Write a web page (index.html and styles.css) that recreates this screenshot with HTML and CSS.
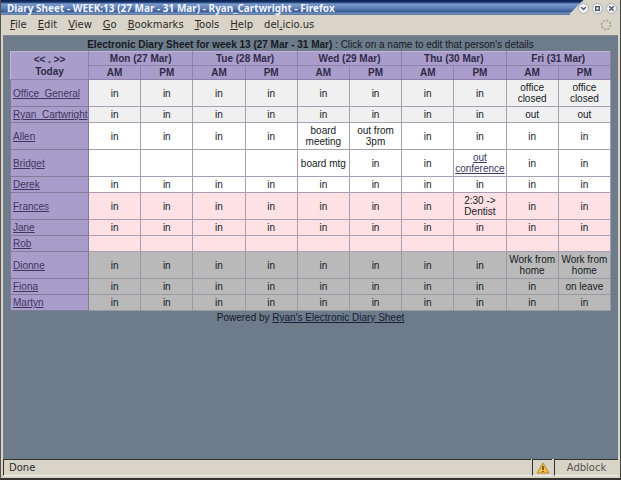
FILE: index.html
```html
<!doctype html>
<html lang="en">
<head>
<meta charset="UTF-8">
<title>Diary Sheet - WEEK:13 (27 Mar - 31 Mar) - Ryan_Cartwright</title>
<link rel="stylesheet" href="styles.css">
</head>

<body>
<div class="window">
	<header class="titlebar">
		<h1>Diary Sheet - WEEK:13 (27 Mar - 31 Mar) - Ryan_Cartwright - Firefox</h1>
		<div class="winbuttons">
			<button aria-label="Minimize"><svg viewBox="0 0 10 10"><path d="M2.5 3.5L5 6L7.5 3.5"/></svg></button>
			<button aria-label="Maximize"><svg viewBox="0 0 10 10"><rect x="3" y="3" width="4" height="4"/></svg></button>
			<button aria-label="Close"><svg viewBox="0 0 10 10"><path d="M2.5 2.5L7.5 7.5M7.5 2.5L2.5 7.5"/></svg></button>
		</div>
	</header>

	<nav class="menubar">
		<button><u>F</u>ile</button>
		<button><u>E</u>dit</button>
		<button><u>V</u>iew</button>
		<button><u>G</u>o</button>
		<button><u>B</u>ookmarks</button>
		<button><u>T</u>ools</button>
		<button><u>H</u>elp</button>
		<button>del<u>.</u>icio.us</button>
		<svg class="throbber" viewBox="0 0 12 12"><circle cx="6" cy="6" r="4.5"/></svg>
	</nav>

	<main class="page">
		<p class="heading"><b>Electronic Diary Sheet for week 13 (27 Mar - 31 Mar)</b> : Click on a name to edit that person's details</p>
		<table class="diary">
			<colgroup>
				<col class="names">
				<col span="10">
			</colgroup>
			<thead>
				<tr>
					<th rowspan="2" class="weeks"><a href="#">&lt;&lt;</a> <a href="#">.</a> <a href="#">&gt;&gt;</a><br><a href="#">Today</a></th>
					<th colspan="2">Mon (27 Mar)</th>
					<th colspan="2">Tue (28 Mar)</th>
					<th colspan="2">Wed (29 Mar)</th>
					<th colspan="2">Thu (30 Mar)</th>
					<th colspan="2">Fri (31 Mar)</th>
				</tr>
				<tr>
					<th>AM</th><th>PM</th>
					<th>AM</th><th>PM</th>
					<th>AM</th><th>PM</th>
					<th>AM</th><th>PM</th>
					<th>AM</th><th>PM</th>
				</tr>
			</thead>
			<tbody class="office">
				<tr><th><a href="#">Office_General</a></th><td>in</td><td>in</td><td>in</td><td>in</td><td>in</td><td>in</td><td>in</td><td>in</td><td>office<br>closed</td><td>office<br>closed</td></tr>
				<tr><th><a href="#">Ryan_Cartwright</a></th><td>in</td><td>in</td><td>in</td><td>in</td><td>in</td><td>in</td><td>in</td><td>in</td><td>out</td><td>out</td></tr>
			</tbody>
			<tbody class="white">
				<tr><th><a href="#">Allen</a></th><td>in</td><td>in</td><td>in</td><td>in</td><td>board<br>meeting</td><td>out from<br>3pm</td><td>in</td><td>in</td><td>in</td><td>in</td></tr>
				<tr class="tall"><th><a href="#">Bridget</a></th><td></td><td></td><td></td><td></td><td>board mtg</td><td>in</td><td>in</td><td><a href="#">out<br>conference</a></td><td>in</td><td>in</td></tr>
				<tr><th><a href="#">Derek</a></th><td>in</td><td>in</td><td>in</td><td>in</td><td>in</td><td>in</td><td>in</td><td>in</td><td>in</td><td>in</td></tr>
			</tbody>
			<tbody class="pink">
				<tr><th><a href="#">Frances</a></th><td>in</td><td>in</td><td>in</td><td>in</td><td>in</td><td>in</td><td>in</td><td>2:30 -&gt;<br>Dentist</td><td>in</td><td>in</td></tr>
				<tr><th><a href="#">Jane</a></th><td>in</td><td>in</td><td>in</td><td>in</td><td>in</td><td>in</td><td>in</td><td>in</td><td>in</td><td>in</td></tr>
				<tr><th><a href="#">Rob</a></th><td></td><td></td><td></td><td></td><td></td><td></td><td></td><td></td><td></td><td></td></tr>
			</tbody>
			<tbody class="grey">
				<tr><th><a href="#">Dionne</a></th><td>in</td><td>in</td><td>in</td><td>in</td><td>in</td><td>in</td><td>in</td><td>in</td><td>Work from<br>home</td><td>Work from<br>home</td></tr>
				<tr><th><a href="#">Fiona</a></th><td>in</td><td>in</td><td>in</td><td>in</td><td>in</td><td>in</td><td>in</td><td>in</td><td>in</td><td>on leave</td></tr>
				<tr><th><a href="#">Martyn</a></th><td>in</td><td>in</td><td>in</td><td>in</td><td>in</td><td>in</td><td>in</td><td>in</td><td>in</td><td>in</td></tr>
			</tbody>
		</table>
		<p class="powered">Powered by <a href="#">Ryan's Electronic Diary Sheet</a></p>
	</main>

	<footer class="statusbar">
		<span class="status">Done</span>
		<span class="warning"><svg viewBox="0 0 14 12"><path class="sign" d="M7 1L13 11H1Z"/><path class="mark" d="M7 4V8M7 9V10"/></svg></span>
		<span class="adblock">Adblock</span>
	</footer>
</div>
</body>
</html>
```

FILE: styles.css
```css
*{
	box-sizing: border-box;
}
body {
	margin: 0;
	font-family: "Liberation Sans", Arial, sans-serif;
	font-size: 10px;
	line-height: 12px;
	color: #161a24;
}
button {
	padding: 0;
	border: 0;
	background: none;
	font: inherit;
	color: inherit;
}
p {
	margin: 0;
}

.window {
	display: flex;
	flex-direction: column;
	min-height: 100vh;
	padding: 0 2px;
	background-color: #d8d4c8;
	border-left: 1px solid #55554f;
	border-right: 1px solid #44443f;
	border-bottom: 2px solid #33332e;
}

/* title bar */
.titlebar {
	display: flex;
	justify-content: space-between;
	height: 15px;
	margin: 0 -2px;
	padding-left: 6px;
	background: linear-gradient(#0c2350 0, #143066 2px, #7c9bcd 4px, #6080b6 8px, #355994 12px, #7b96c0 13px, #5673a2);
}
.titlebar h1 {
	margin: 0;
	font: bold 10px/16px "Noto Sans", "DejaVu Sans", sans-serif;
	color: #f0f4fc;
	white-space: nowrap;
}
.winbuttons {
	display: flex;
	gap: 3px;
	padding: 3px 3px 0 8px;
	background: linear-gradient(135deg, transparent 9px, #d8d4c8 10px);
}
.winbuttons button {
	width: 11px;
	height: 11px;
	border-radius: 50%;
	background-color: #eeeef0;
	border: 1px solid #a9afba;
}
.winbuttons svg {
	display: block;
	fill: none;
	stroke: #4a5260;
	stroke-width: 1.5;
}

/* menu */
.menubar {
	display: flex;
	align-items: center;
	gap: 11px;
	height: 20px;
	padding: 0 6px 0 7px;
	font-family: "DejaVu Sans", sans-serif;
	color: #2b2b27;
}
.throbber {
	width: 12px;
	margin-left: auto;
	fill: none;
	stroke: #aaa79f;
	stroke-width: 2;
	stroke-dasharray: 2 1.5;
}

/* diary */
.page {
	flex: 1;
	padding: 3px 7px 0;
	background-color: #6d7b8a;
	border-top: 1px solid #85888a;
	text-align: center;
}
.diary {
	width: 100%;
	table-layout: fixed;
	border-collapse: collapse;
	line-height: 11px;
	border: 1px solid #c6bddd;
}
.names {
	width: 13%;
}
.diary th, .diary td {
	padding: 2px 0;
	height: 16px;
	border: 1px solid #a69fb1;
}
.diary th {
	background-color: #a99dcb;
	border-color: #837b9c;
	color: #302a48;
}
.diary thead th {
	height: 14px;
	padding: 1px 0;
	border-color: #c1b7d9 #8c82aa #8c82aa #c1b7d9;
}
.diary thead .weeks {
	line-height: 12px;
}
.weeks a {
	color: inherit;
	text-decoration: none;
}
.diary tbody th {
	padding-left: 2px;
	text-align: left;
	font-weight: normal;
}
.diary tbody a {
	color: #41365f;
}
.tall td {
	height: 27px;
}
.office td {
	background-color: #f0f0f0;
}
.white td {
	background-color: #fff;
}
.pink td {
	background-color: #fde1e5;
}
.grey td {
	background-color: #b8b9b8;
	border-color: #9999a1;
}
.powered {
	padding-top: 1px;
}
.powered a {
	color: #17203a;
}

/* status bar */
.statusbar {
	display: flex;
	height: 19px;
	padding-bottom: 2px;
	font: 10px/15px "DejaVu Sans", sans-serif;
	color: #2b2b27;
}
.statusbar span {
	border-top: 1px solid #33332e;
	border-left: 1px solid #33332e;
	border-bottom: 1px solid #f0eee6;
}
.statusbar .status {
	flex: 1;
	padding-left: 5px;
}
.statusbar .warning {
	width: 20px;
	margin-left: 1px;
	padding: 2px 3px;
}
.warning svg {
	display: block;
	width: 14px;
	height: 12px;
}
.sign {
	fill: #f5c04a;
	stroke: #b98325;
}
.mark {
	stroke: #59401a;
	stroke-width: 1.5;
}
.statusbar .adblock {
	width: 64px;
	margin-left: 2px;
	text-align: center;
	color: #55554f;
}
```
